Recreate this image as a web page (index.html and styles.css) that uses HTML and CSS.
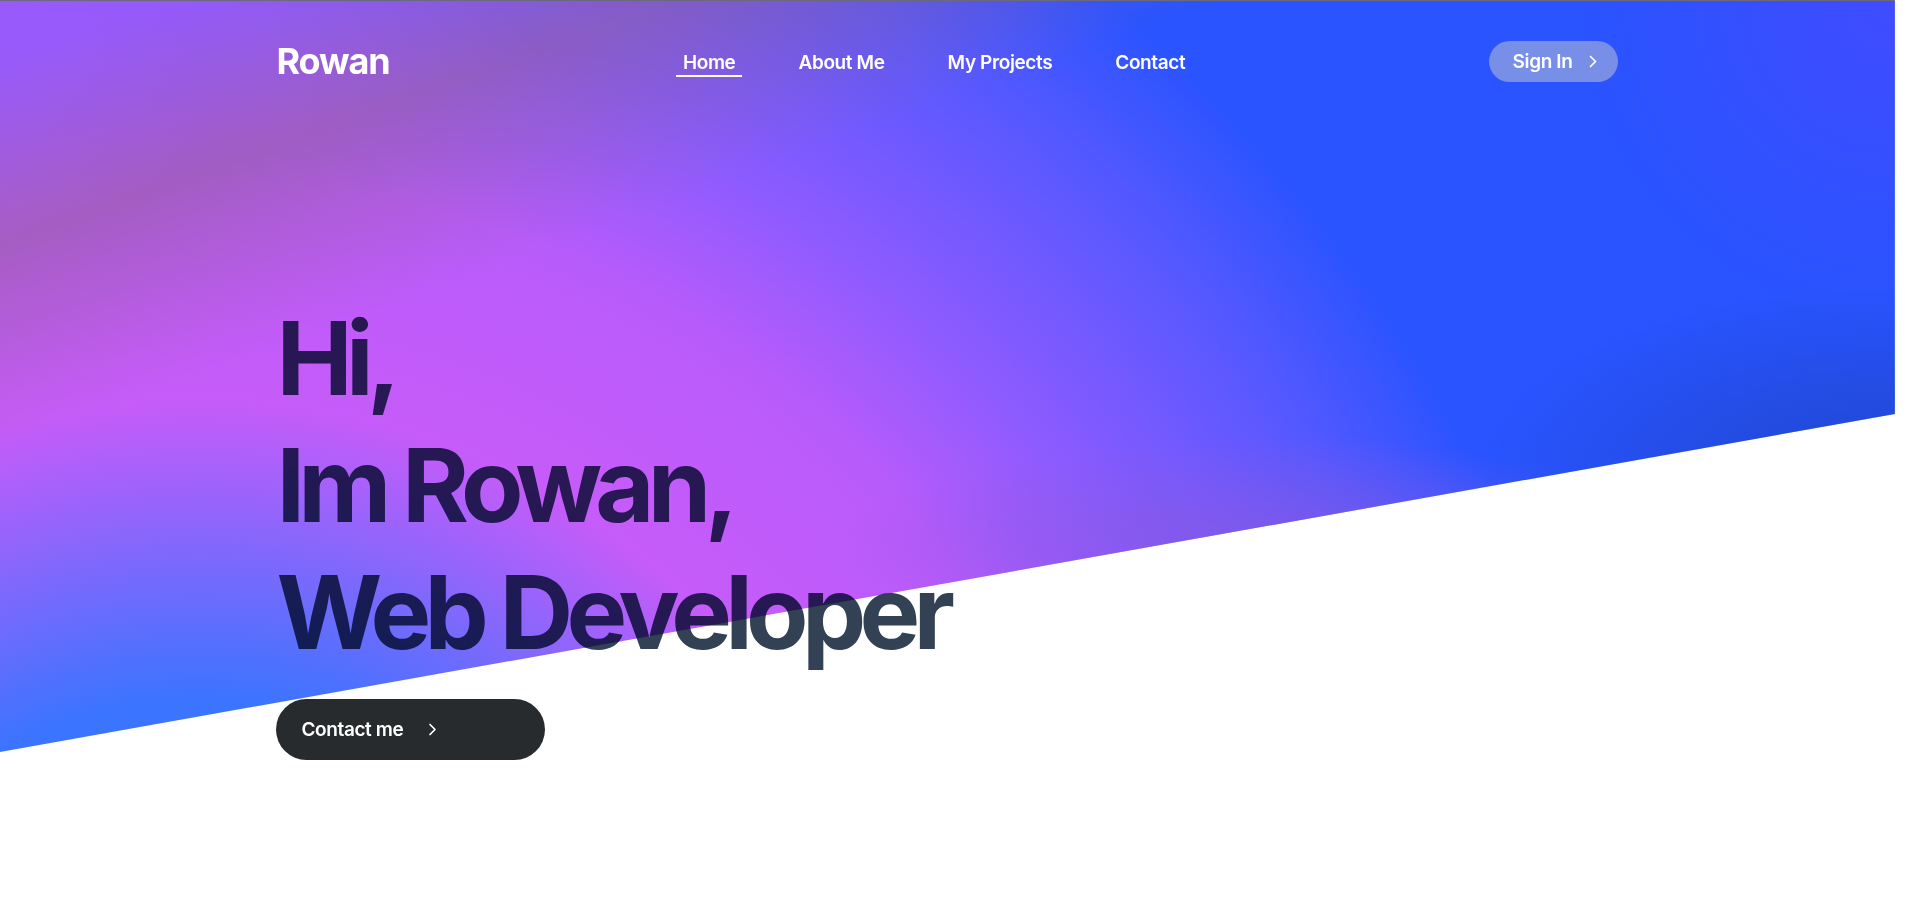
FILE: index.html
```html
<!DOCTYPE html>
<html lang="en">
<head>
<meta charset="utf-8">
<title>Rowan</title>
<link rel="stylesheet" href="styles.css">
</head>
<body>
<div class="hero">
  <header class="topbar container">
    <a class="logo" href="#">Rowan</a>
    <nav class="nav">
      <a class="nav-link is-active" href="#">Home</a>
      <a class="nav-link" href="#">About Me</a>
      <a class="nav-link" href="#">My Projects</a>
      <a class="nav-link" href="#">Contact</a>
    </nav>
    <a class="signin" href="#">Sign In
      <svg class="chev" width="8" height="13" viewBox="0 0 8 13" aria-hidden="true"><path d="M1.5 1.5l5 5-5 5" fill="none" stroke="#fff" stroke-width="1.7" stroke-linecap="round" stroke-linejoin="round"/></svg>
    </a>
  </header>
  <section class="intro container">
    <h1 class="headline">Hi,<br>Im Rowan,<br>Web Developer</h1>
    <a class="cta" href="#">Contact me
      <svg class="chev" width="9" height="13" viewBox="0 0 9 13" aria-hidden="true"><path d="M2 1.5l5 5-5 5" fill="none" stroke="#fff" stroke-width="1.7" stroke-linecap="round" stroke-linejoin="round"/></svg>
    </a>
  </section>
</div>
</body>
</html>
```

FILE: styles.css
```css
* { box-sizing: border-box; }

html, body {
  margin: 0;
  background: #ffffff;
}

body {
  font-family: Inter, "Noto Sans", "Liberation Sans", sans-serif;
  color: #ffffff;
}

a { text-decoration: none; color: inherit; }

.hero {
  position: relative;
  isolation: isolate;
  width: 99%;
  min-height: 903px;
}

.hero::before {
  content: "";
  position: absolute;
  z-index: -1;
  left: 0;
  top: 0;
  width: 100%;
  height: 751px;
  clip-path: polygon(0 0, 100% 0, 100% 414px, 0 100%);
  border-top: 1px solid #6c6880;
  background:
    linear-gradient(160deg, rgba(150, 95, 140, 0) 4%, rgba(150, 95, 140, 0.5) 17%, rgba(150, 95, 140, 0) 31%),
    radial-gradient(ellipse 420px 200px at 100% 64%, rgba(24, 60, 170, 0.6), rgba(24, 60, 170, 0)),
    radial-gradient(ellipse 420px 110px at 1260px 545px, rgba(135, 88, 225, 0.75), rgba(135, 88, 225, 0)),
    radial-gradient(ellipse 320px 320px at 100% 0%, rgba(80, 70, 255, 0.6), rgba(80, 70, 255, 0)),
    radial-gradient(ellipse 520px 300px at 0% 0%, rgba(158, 90, 250, 0.85), rgba(158, 90, 250, 0)),
    radial-gradient(circle at 200px 1100px, #3a74ff 400px, #c65cf9 700px, #b85bfb 920px, #8c5bff 1070px, #5458ff 1290px, #2954ff 1430px);
}

.container {
  max-width: 1342px;
  margin: 0 auto;
}

.topbar {
  display: flex;
  align-items: center;
  justify-content: space-between;
  padding-top: 40px;
}

.logo {
  font-size: 36px;
  font-weight: 700;
  line-height: 42px;
  letter-spacing: -0.03em;
}

.nav {
  display: flex;
  gap: 49px;
  padding-top: 5px;
  margin-right: 10px;
}

.nav-link {
  font-size: 19px;
  font-weight: 600;
  line-height: 24px;
  padding: 0 7px;
  border-bottom: 2px solid transparent;
  letter-spacing: -0.02em;
}

.nav-link.is-active {
  border-bottom-color: #ffffff;
}

.signin {
  display: flex;
  align-items: center;
  gap: 17px;
  height: 41px;
  padding: 0 21px 0 24px;
  border-radius: 999px;
  background: rgba(200, 202, 208, 0.5);
  font-size: 19px;
  font-weight: 600;
  letter-spacing: -0.02em;
}

.chev { display: block; flex: none; }

.intro {
  padding-top: 213px;
}

.headline {
  margin: 0;
  font-size: 102px;
  line-height: 127px;
  font-weight: 700;
  letter-spacing: -0.066em;
  color: #334155;
  mix-blend-mode: multiply;
}

.cta {
  display: flex;
  align-items: center;
  gap: 25px;
  width: 269px;
  height: 61px;
  margin-top: 23px;
  padding-left: 25px;
  border-radius: 999px;
  background: #282b2d;
  font-size: 19px;
  font-weight: 600;
  letter-spacing: -0.02em;
}
```
